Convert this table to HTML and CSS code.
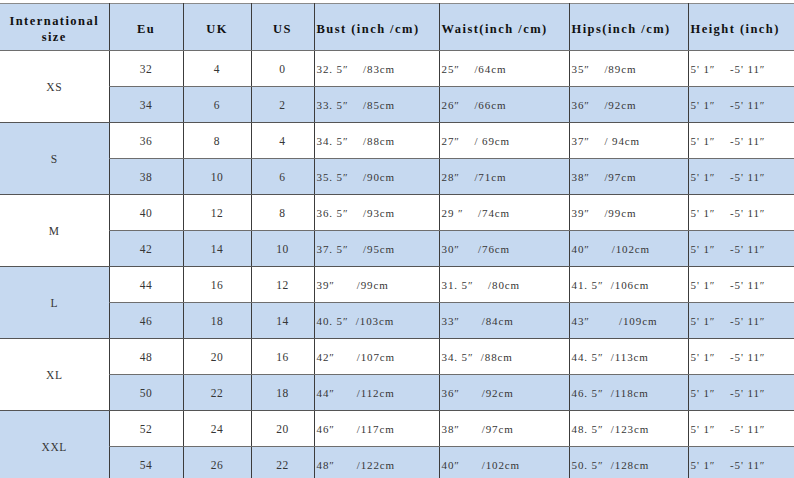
FILE: index.html
```html
<!DOCTYPE html>
<html>
<head>
<meta charset="utf-8">
<link rel="stylesheet" href="styles.css">
</head>
<body>
<table class="chart">
  <colgroup>
    <col class="c-size"><col class="c-eu"><col class="c-uk"><col class="c-us">
    <col class="c-bust"><col class="c-waist"><col class="c-hips"><col class="c-height">
  </colgroup>
  <thead>
    <tr class="head">
      <th class="ctr">International<br>size</th>
      <th class="ctr">Eu</th>
      <th class="ctr">UK</th>
      <th class="ctr">US</th>
      <th>Bust (inch /cm)</th>
      <th>Waist(inch /cm)</th>
      <th>Hips(inch /cm)</th>
      <th>Height (inch)</th>
    </tr>
  </thead>
  <tbody>
    <tr class="w">
      <td class="size" rowspan="2">XS</td>
      <td class="ctr">32</td><td class="ctr">4</td><td class="ctr">0</td>
      <td>32. 5″    /83cm</td><td>25″    /64cm</td><td>35″    /89cm</td><td>5' 1″    -5' 11″</td>
    </tr>
    <tr class="b">
      <td class="ctr">34</td><td class="ctr">6</td><td class="ctr">2</td>
      <td>33. 5″    /85cm</td><td>26″    /66cm</td><td>36″    /92cm</td><td>5' 1″    -5' 11″</td>
    </tr>
    <tr class="w">
      <td class="size blue" rowspan="2">S</td>
      <td class="ctr">36</td><td class="ctr">8</td><td class="ctr">4</td>
      <td>34. 5″    /88cm</td><td>27″    / 69cm</td><td>37″    / 94cm</td><td>5' 1″    -5' 11″</td>
    </tr>
    <tr class="b">
      <td class="ctr">38</td><td class="ctr">10</td><td class="ctr">6</td>
      <td>35. 5″    /90cm</td><td>28″    /71cm</td><td>38″    /97cm</td><td>5' 1″    -5' 11″</td>
    </tr>
    <tr class="w">
      <td class="size" rowspan="2">M</td>
      <td class="ctr">40</td><td class="ctr">12</td><td class="ctr">8</td>
      <td>36. 5″    /93cm</td><td>29 ″    /74cm</td><td>39″    /99cm</td><td>5' 1″    -5' 11″</td>
    </tr>
    <tr class="b">
      <td class="ctr">42</td><td class="ctr">14</td><td class="ctr">10</td>
      <td>37. 5″    /95cm</td><td>30″     /76cm</td><td>40″      /102cm</td><td>5' 1″    -5' 11″</td>
    </tr>
    <tr class="w">
      <td class="size blue" rowspan="2">L</td>
      <td class="ctr">44</td><td class="ctr">16</td><td class="ctr">12</td>
      <td>39″      /99cm</td><td>31. 5″    /80cm</td><td>41. 5″  /106cm</td><td>5' 1″    -5' 11″</td>
    </tr>
    <tr class="b">
      <td class="ctr">46</td><td class="ctr">18</td><td class="ctr">14</td>
      <td>40. 5″  /103cm</td><td>33″      /84cm</td><td>43″        /109cm</td><td>5' 1″    -5' 11″</td>
    </tr>
    <tr class="w">
      <td class="size" rowspan="2">XL</td>
      <td class="ctr">48</td><td class="ctr">20</td><td class="ctr">16</td>
      <td>42″      /107cm</td><td>34. 5″  /88cm</td><td>44. 5″  /113cm</td><td>5' 1″    -5' 11″</td>
    </tr>
    <tr class="b">
      <td class="ctr">50</td><td class="ctr">22</td><td class="ctr">18</td>
      <td>44″      /112cm</td><td>36″      /92cm</td><td>46. 5″  /118cm</td><td>5' 1″    -5' 11″</td>
    </tr>
    <tr class="w">
      <td class="size blue" rowspan="2">XXL</td>
      <td class="ctr">52</td><td class="ctr">24</td><td class="ctr">20</td>
      <td>46″      /117cm</td><td>38″      /97cm</td><td>48. 5″  /123cm</td><td>5' 1″    -5' 11″</td>
    </tr>
    <tr class="b">
      <td class="ctr">54</td><td class="ctr">26</td><td class="ctr">22</td>
      <td>48″      /122cm</td><td>40″      /102cm</td><td>50. 5″  /128cm</td><td>5' 1″    -5' 11″</td>
    </tr>
  </tbody>
</table>
</body>
</html>
```

FILE: styles.css
```css
html, body {
  margin: 0;
  padding: 0;
  background: #ffffff;
}

body {
  padding-top: 3px;
  overflow: hidden;
}

.chart {
  width: 794px;
  border-collapse: collapse;
  table-layout: fixed;
  font-family: "Liberation Serif", "DejaVu Serif", serif;
  color: #363636;
  border-top: 1px solid #8a8a8a;
}

.c-size { width: 109px; }
.c-eu { width: 74px; }
.c-uk { width: 68px; }
.c-us { width: 63px; }
.c-bust { width: 125px; }
.c-waist { width: 130px; }
.c-hips { width: 119px; }
.c-height { width: 106px; }

.chart th,
.chart td {
  padding: 0 0 0 2px;
  border-left: 1px solid #3c3c3c;
  border-bottom: 1px solid #6e6e6e;
  white-space: pre;
  text-align: left;
  vertical-align: middle;
  overflow: hidden;
}

.chart th:first-child,
.chart td.size {
  border-left: none;
}

.head {
  height: 47px;
  background: #c6d9f0;
}

.head th {
  font-size: 12.5px;
  font-weight: bold;
  letter-spacing: 1.45px;
  color: #111111;
  line-height: 16px;
  padding-top: 4px;
}

.chart td {
  font-size: 11px;
  letter-spacing: 0.9px;
  height: 35px;
}

.chart .ctr {
  text-align: center;
  padding-left: 0;
}

.chart td.ctr {
  font-size: 11.5px;
  letter-spacing: 0.6px;
}

tr.w { background: #ffffff; }
tr.b { background: #c6d9f0; }

.chart td.size {
  background: #ffffff;
  text-align: center;
  padding: 0;
  font-size: 11.5px;
  letter-spacing: 0.6px;
  border-bottom: 1px solid #555555;
}

.chart td.size.blue {
  background: #c6d9f0;
}

tr.b td {
  border-bottom-color: #555555;
}
```
